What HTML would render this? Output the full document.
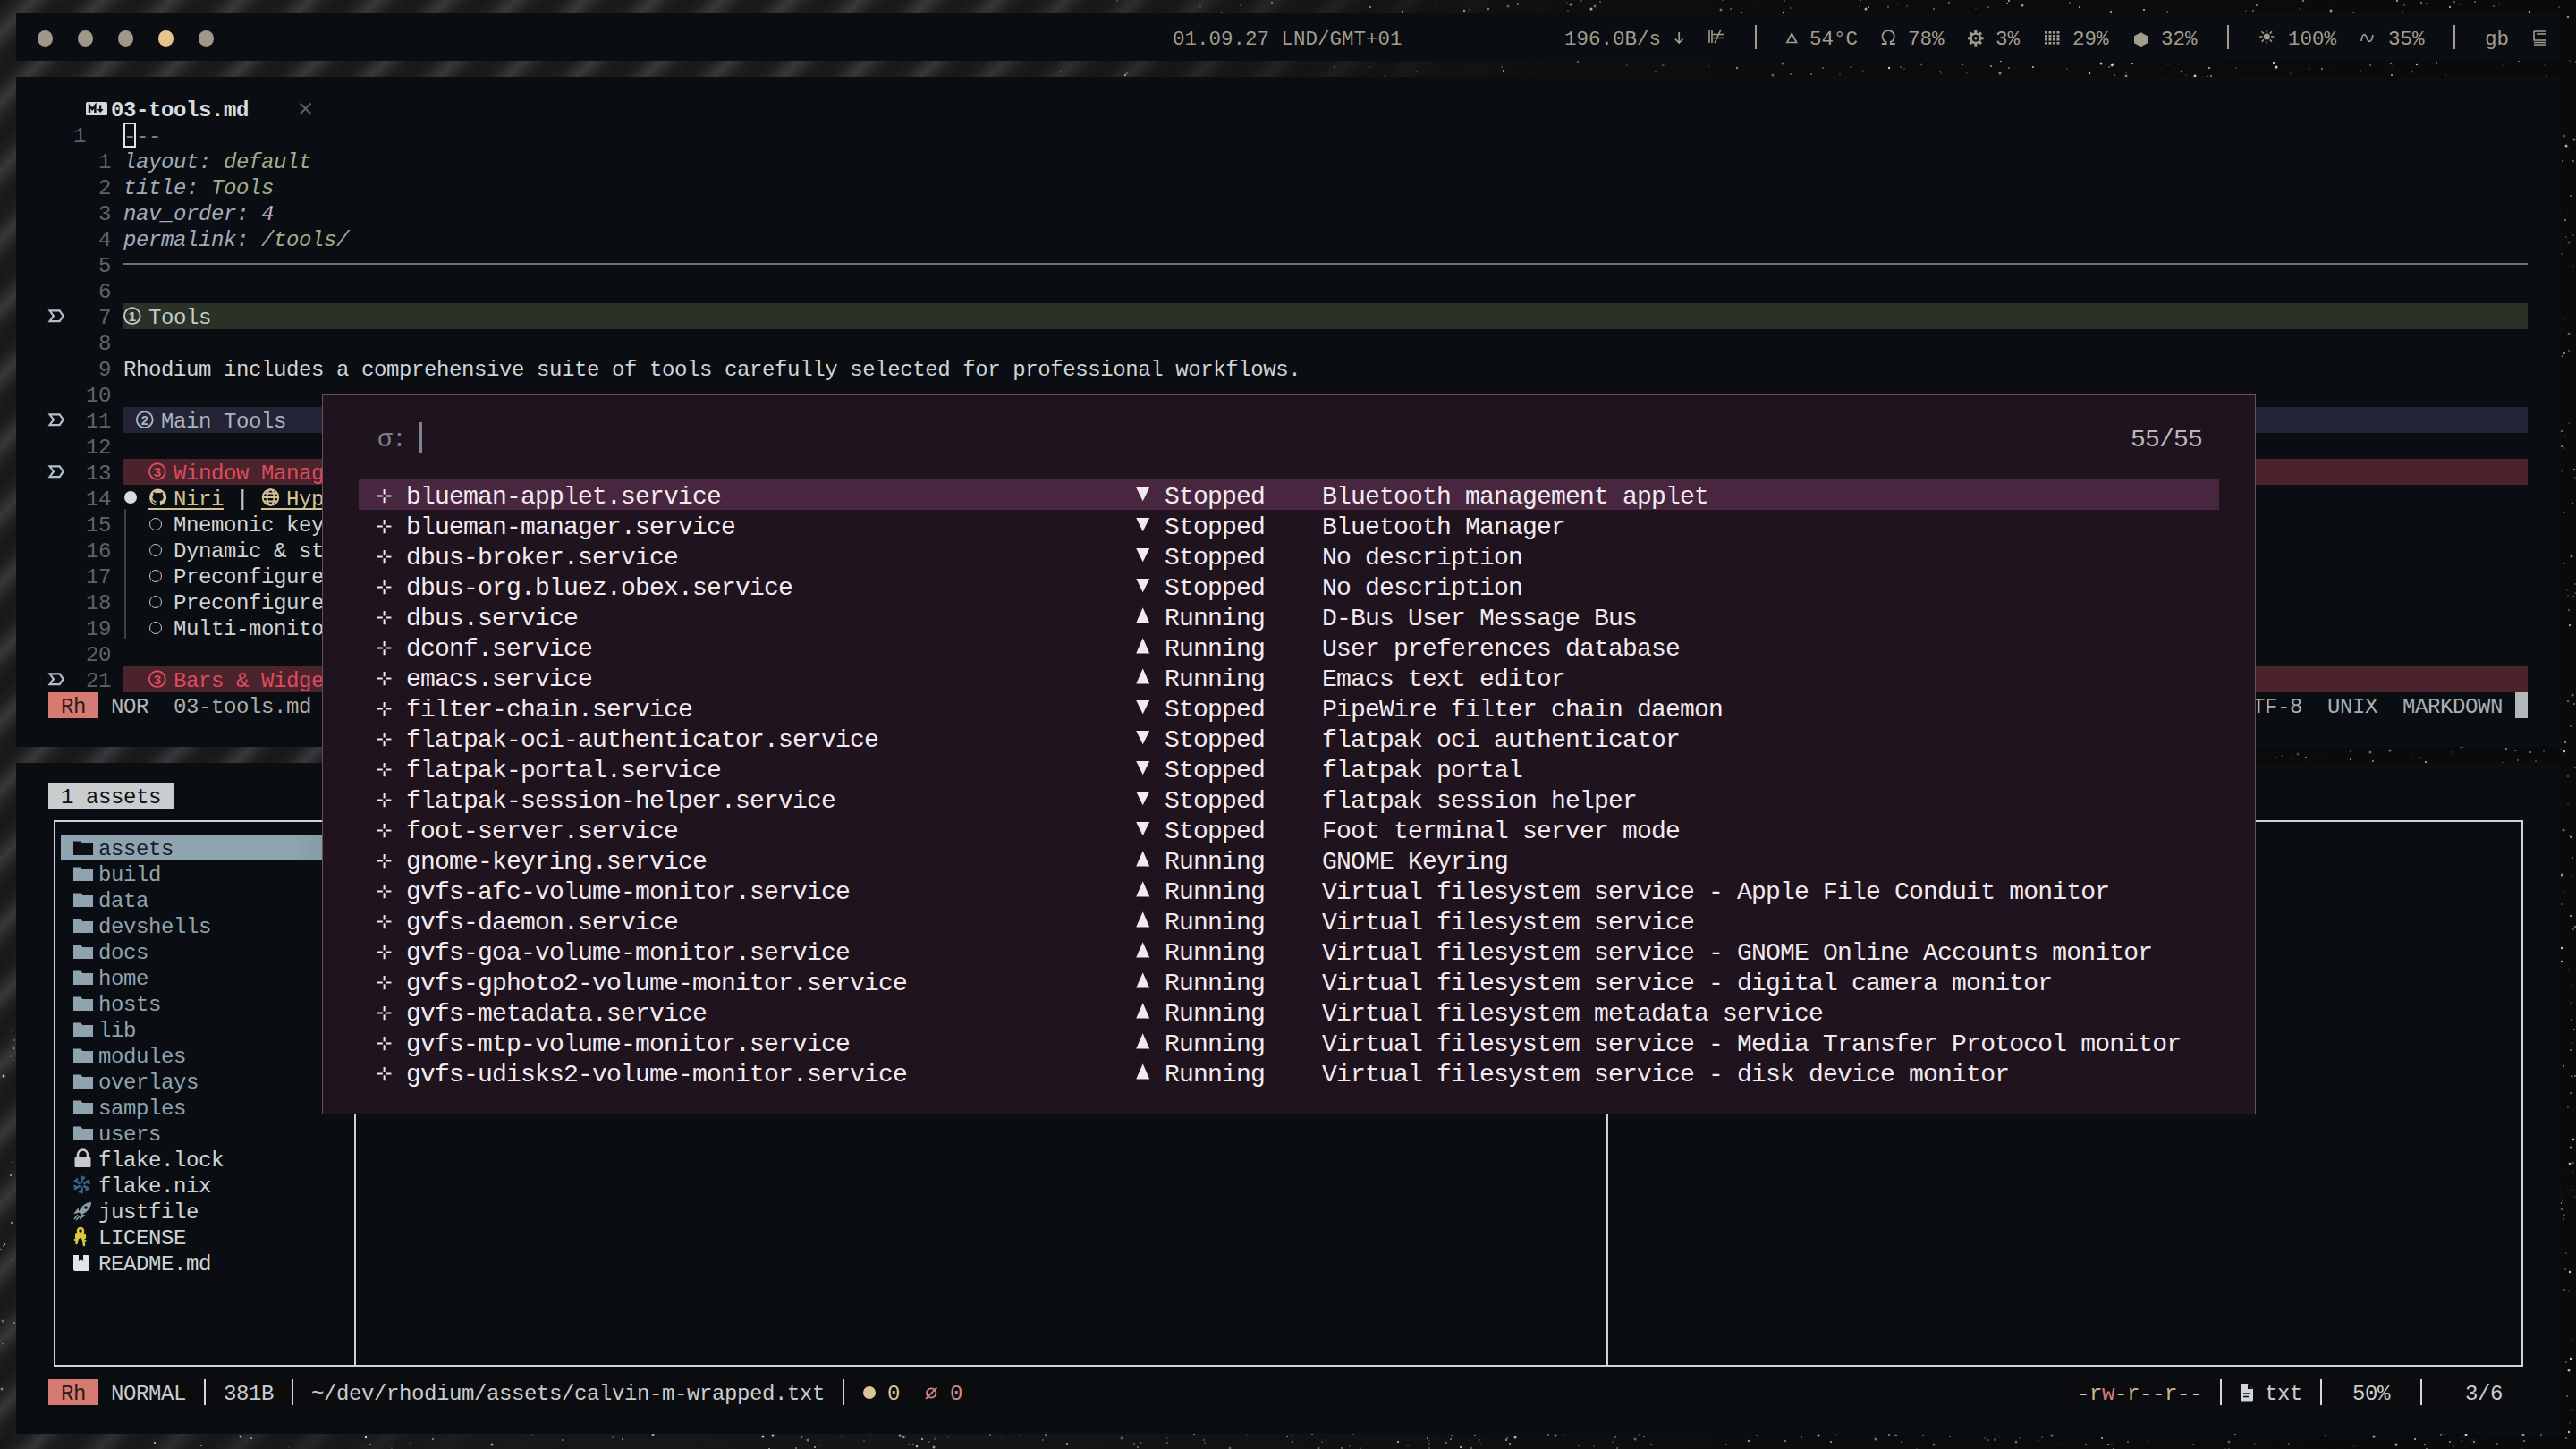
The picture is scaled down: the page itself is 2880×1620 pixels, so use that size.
<!DOCTYPE html><html><head><meta charset="utf-8"><style>
*{margin:0;padding:0;box-sizing:border-box}
html,body{width:2880px;height:1620px;overflow:hidden}
body{position:relative;background:#121212;font-family:"Liberation Mono",monospace;}
.bg{position:absolute;left:0;top:0;width:2880px;height:1620px;background:linear-gradient(90deg,#1a1a1a 0%,#151515 40%,#0c0c0c 70%,#0a0a0a 100%)}
.stripes{position:absolute;left:0;top:0;width:2880px;height:1620px;
 background:repeating-linear-gradient(135deg,#181818 0px,#1e1e1e 12px,#38383a 27px,#1e1e1e 42px,#181818 54.4px);
 -webkit-mask-image:linear-gradient(125deg,#000 0%,#000 27%,rgba(0,0,0,0.5) 36%,rgba(0,0,0,0) 44%);}
.win{position:absolute;background:#0a0e12}
.r{position:absolute}
.t{position:absolute;white-space:pre;height:29px;line-height:34px;font-size:24px;letter-spacing:-0.4px;color:#d0d4d6}
.pt{position:absolute;white-space:pre;height:34px;line-height:39px;font-size:28px;letter-spacing:-0.8px;color:#f2eaf0}
.bt{position:absolute;white-space:pre;height:52px;line-height:52px;font-size:22.5px;letter-spacing:0px;color:#a39c8c}
svg{position:absolute;overflow:visible}
</style></head><body><div class="bg"></div><div class="stripes"></div><svg style="left:0;top:0" width="2880" height="1620"><g fill="#e8e8e8"><circle cx="1249" cy="1" r="0.9" fill-opacity="0.29"/><circle cx="1783" cy="7" r="1.5" fill-opacity="0.45"/><circle cx="1686" cy="7" r="1.5" fill-opacity="0.37"/><circle cx="2246" cy="1" r="0.9" fill-opacity="0.82"/><circle cx="1924" cy="11" r="1.5" fill-opacity="0.45"/><circle cx="2002" cy="9" r="0.9" fill-opacity="0.29"/><circle cx="1664" cy="10" r="1.2" fill-opacity="0.50"/><circle cx="1926" cy="0" r="0.7" fill-opacity="0.65"/><circle cx="1422" cy="3" r="1.2" fill-opacity="0.41"/><circle cx="2360" cy="13" r="0.9" fill-opacity="0.89"/><circle cx="1966" cy="6" r="0.6" fill-opacity="0.36"/><circle cx="1697" cy="4" r="0.9" fill-opacity="0.60"/><circle cx="1756" cy="5" r="1.5" fill-opacity="0.59"/><circle cx="1779" cy="10" r="1.5" fill-opacity="0.76"/><circle cx="2519" cy="12" r="0.9" fill-opacity="0.51"/><circle cx="1387" cy="6" r="0.7" fill-opacity="0.54"/><circle cx="1768" cy="1" r="0.9" fill-opacity="0.35"/><circle cx="1342" cy="7" r="0.6" fill-opacity="0.74"/><circle cx="2132" cy="7" r="1.0" fill-opacity="0.27"/><circle cx="2739" cy="8" r="1.0" fill-opacity="0.84"/><circle cx="2183" cy="4" r="0.6" fill-opacity="0.70"/><circle cx="2223" cy="8" r="0.8" fill-opacity="0.66"/><circle cx="2314" cy="3" r="1.2" fill-opacity="0.27"/><circle cx="1994" cy="14" r="1.2" fill-opacity="0.89"/><circle cx="2750" cy="5" r="0.7" fill-opacity="0.56"/><circle cx="2079" cy="7" r="0.6" fill-opacity="0.72"/><circle cx="2606" cy="12" r="1.5" fill-opacity="0.64"/><circle cx="1366" cy="14" r="1.0" fill-opacity="0.34"/><circle cx="2511" cy="12" r="0.8" fill-opacity="0.39"/><circle cx="1568" cy="13" r="1.2" fill-opacity="0.48"/><circle cx="1532" cy="8" r="0.9" fill-opacity="0.75"/><circle cx="1753" cy="12" r="0.7" fill-opacity="0.56"/><circle cx="2089" cy="8" r="1.0" fill-opacity="0.59"/><circle cx="2575" cy="1" r="1.0" fill-opacity="0.64"/><circle cx="2325" cy="8" r="1.0" fill-opacity="0.82"/><circle cx="2713" cy="4" r="0.7" fill-opacity="0.80"/><circle cx="2080" cy="0" r="0.9" fill-opacity="0.71"/><circle cx="2767" cy="2" r="0.7" fill-opacity="0.88"/><circle cx="2244" cy="4" r="0.9" fill-opacity="0.80"/><circle cx="1947" cy="14" r="1.0" fill-opacity="0.85"/><circle cx="1643" cy="11" r="0.6" fill-opacity="0.77"/><circle cx="1752" cy="3" r="0.6" fill-opacity="0.54"/><circle cx="2111" cy="8" r="0.9" fill-opacity="0.41"/><circle cx="2794" cy="5" r="0.7" fill-opacity="0.47"/><circle cx="2397" cy="11" r="0.9" fill-opacity="0.89"/><circle cx="2828" cy="13" r="1.2" fill-opacity="0.73"/><circle cx="2423" cy="13" r="0.8" fill-opacity="0.64"/><circle cx="1995" cy="1" r="0.8" fill-opacity="0.54"/><circle cx="2162" cy="10" r="1.0" fill-opacity="0.50"/><circle cx="2086" cy="10" r="1.5" fill-opacity="0.71"/><circle cx="1637" cy="12" r="1.2" fill-opacity="0.63"/><circle cx="2571" cy="10" r="0.7" fill-opacity="0.31"/><circle cx="2686" cy="13" r="1.0" fill-opacity="0.29"/><circle cx="2122" cy="4" r="0.8" fill-opacity="0.40"/><circle cx="2179" cy="3" r="0.9" fill-opacity="0.57"/><circle cx="2209" cy="9" r="0.6" fill-opacity="0.64"/><circle cx="1789" cy="2" r="0.9" fill-opacity="0.42"/><circle cx="1935" cy="10" r="0.8" fill-opacity="0.71"/><circle cx="2861" cy="8" r="0.6" fill-opacity="0.86"/><circle cx="2788" cy="7" r="0.7" fill-opacity="0.85"/><circle cx="2680" cy="1" r="1.2" fill-opacity="0.59"/><circle cx="2744" cy="2" r="1.0" fill-opacity="0.43"/><circle cx="2523" cy="6" r="0.9" fill-opacity="0.69"/><circle cx="2707" cy="3" r="1.2" fill-opacity="0.44"/><circle cx="1697" cy="5" r="0.8" fill-opacity="0.81"/><circle cx="2261" cy="6" r="1.5" fill-opacity="0.66"/><circle cx="2631" cy="14" r="1.2" fill-opacity="0.30"/><circle cx="2688" cy="6" r="0.7" fill-opacity="0.67"/><circle cx="1605" cy="6" r="0.7" fill-opacity="0.30"/><circle cx="2148" cy="72" r="1.5" fill-opacity="0.29"/><circle cx="2444" cy="84" r="0.6" fill-opacity="0.53"/><circle cx="2199" cy="82" r="0.9" fill-opacity="0.25"/><circle cx="2464" cy="86" r="0.6" fill-opacity="0.40"/><circle cx="2377" cy="81" r="0.9" fill-opacity="0.31"/><circle cx="2237" cy="68" r="1.0" fill-opacity="0.85"/><circle cx="1859" cy="73" r="0.8" fill-opacity="0.59"/><circle cx="1260" cy="82" r="0.8" fill-opacity="0.59"/><circle cx="1679" cy="75" r="1.0" fill-opacity="0.25"/><circle cx="1548" cy="86" r="0.8" fill-opacity="0.67"/><circle cx="2545" cy="77" r="0.7" fill-opacity="0.27"/><circle cx="1186" cy="80" r="0.7" fill-opacity="0.57"/><circle cx="1942" cy="76" r="1.2" fill-opacity="0.53"/><circle cx="2069" cy="75" r="0.6" fill-opacity="0.77"/><circle cx="2129" cy="77" r="0.7" fill-opacity="0.45"/><circle cx="2362" cy="72" r="1.5" fill-opacity="0.83"/><circle cx="2582" cy="77" r="0.6" fill-opacity="0.87"/><circle cx="2805" cy="71" r="0.6" fill-opacity="0.37"/><circle cx="2417" cy="86" r="0.6" fill-opacity="0.25"/><circle cx="2650" cy="73" r="1.0" fill-opacity="0.47"/><circle cx="2639" cy="79" r="0.6" fill-opacity="0.79"/><circle cx="2236" cy="82" r="1.5" fill-opacity="0.57"/><circle cx="2673" cy="71" r="1.2" fill-opacity="0.45"/><circle cx="1993" cy="71" r="1.5" fill-opacity="0.46"/><circle cx="2845" cy="73" r="0.6" fill-opacity="0.52"/><circle cx="2847" cy="85" r="0.7" fill-opacity="0.52"/><circle cx="2439" cy="80" r="1.5" fill-opacity="0.44"/><circle cx="2384" cy="71" r="1.0" fill-opacity="0.81"/><circle cx="2724" cy="70" r="1.0" fill-opacity="0.48"/><circle cx="2880" cy="69" r="0.7" fill-opacity="0.78"/><circle cx="2358" cy="75" r="1.0" fill-opacity="0.45"/><circle cx="1584" cy="80" r="0.7" fill-opacity="0.51"/><circle cx="2545" cy="75" r="1.5" fill-opacity="0.90"/><circle cx="2543" cy="76" r="0.6" fill-opacity="0.28"/><circle cx="2170" cy="82" r="0.8" fill-opacity="0.33"/><circle cx="2716" cy="86" r="0.6" fill-opacity="0.64"/><circle cx="1982" cy="84" r="1.5" fill-opacity="0.39"/><circle cx="1492" cy="75" r="0.7" fill-opacity="0.88"/><circle cx="2349" cy="71" r="1.5" fill-opacity="0.74"/><circle cx="2246" cy="76" r="0.9" fill-opacity="0.51"/><circle cx="2311" cy="77" r="0.6" fill-opacity="0.66"/><circle cx="2468" cy="86" r="1.5" fill-opacity="0.32"/><circle cx="2336" cy="82" r="1.2" fill-opacity="0.85"/><circle cx="2349" cy="71" r="0.9" fill-opacity="0.39"/><circle cx="2697" cy="80" r="0.7" fill-opacity="0.76"/><circle cx="2472" cy="85" r="1.0" fill-opacity="0.63"/><circle cx="2542" cy="70" r="1.2" fill-opacity="0.81"/><circle cx="2125" cy="75" r="0.8" fill-opacity="0.63"/><circle cx="2361" cy="73" r="1.5" fill-opacity="0.63"/><circle cx="1911" cy="74" r="0.6" fill-opacity="0.39"/><circle cx="1764" cy="69" r="1.0" fill-opacity="0.48"/><circle cx="1681" cy="79" r="1.0" fill-opacity="0.79"/><circle cx="2038" cy="76" r="0.7" fill-opacity="0.82"/><circle cx="2253" cy="75" r="0.6" fill-opacity="0.29"/><circle cx="2364" cy="84" r="1.0" fill-opacity="0.54"/><circle cx="2699" cy="81" r="0.6" fill-opacity="0.28"/><circle cx="1531" cy="75" r="0.6" fill-opacity="0.84"/><circle cx="1851" cy="80" r="1.0" fill-opacity="0.36"/><circle cx="2561" cy="82" r="0.6" fill-opacity="0.49"/><circle cx="1258" cy="84" r="1.2" fill-opacity="0.54"/><circle cx="2002" cy="83" r="0.8" fill-opacity="0.66"/><circle cx="2799" cy="73" r="0.7" fill-opacity="0.31"/><circle cx="2424" cy="72" r="0.8" fill-opacity="0.37"/><circle cx="2454" cy="85" r="1.5" fill-opacity="0.89"/><circle cx="2470" cy="76" r="1.0" fill-opacity="0.83"/><circle cx="2273" cy="75" r="1.0" fill-opacity="0.84"/><circle cx="2675" cy="74" r="0.6" fill-opacity="0.27"/><circle cx="2194" cy="72" r="1.0" fill-opacity="0.83"/><circle cx="2720" cy="70" r="0.6" fill-opacity="0.27"/><circle cx="2734" cy="84" r="0.6" fill-opacity="0.79"/><circle cx="1819" cy="73" r="0.6" fill-opacity="0.76"/><circle cx="1861" cy="73" r="0.8" fill-opacity="0.26"/><circle cx="2226" cy="74" r="1.0" fill-opacity="0.62"/><circle cx="2057" cy="83" r="0.8" fill-opacity="0.36"/><circle cx="2816" cy="68" r="0.9" fill-opacity="0.70"/><circle cx="2377" cy="85" r="1.5" fill-opacity="0.58"/><circle cx="2702" cy="72" r="1.2" fill-opacity="0.75"/><circle cx="2674" cy="84" r="0.9" fill-opacity="0.83"/><circle cx="2596" cy="77" r="1.2" fill-opacity="0.40"/><circle cx="2169" cy="80" r="0.8" fill-opacity="0.59"/><circle cx="2500" cy="76" r="0.8" fill-opacity="0.36"/><circle cx="2025" cy="83" r="0.7" fill-opacity="0.88"/><circle cx="2083" cy="79" r="0.7" fill-opacity="0.46"/><circle cx="2112" cy="76" r="1.2" fill-opacity="0.84"/><circle cx="2019" cy="846" r="1.5" fill-opacity="0.40"/><circle cx="2080" cy="851" r="1.2" fill-opacity="0.63"/><circle cx="658" cy="838" r="0.9" fill-opacity="0.45"/><circle cx="1809" cy="837" r="1.5" fill-opacity="0.51"/><circle cx="2052" cy="838" r="0.9" fill-opacity="0.55"/><circle cx="1790" cy="842" r="1.5" fill-opacity="0.37"/><circle cx="1885" cy="849" r="0.9" fill-opacity="0.84"/><circle cx="2063" cy="852" r="0.8" fill-opacity="0.32"/><circle cx="1655" cy="845" r="1.0" fill-opacity="0.26"/><circle cx="2283" cy="842" r="1.2" fill-opacity="0.87"/><circle cx="2197" cy="837" r="0.8" fill-opacity="0.66"/><circle cx="727" cy="842" r="0.6" fill-opacity="0.52"/><circle cx="1211" cy="848" r="0.8" fill-opacity="0.32"/><circle cx="2798" cy="853" r="0.9" fill-opacity="0.39"/><circle cx="1827" cy="843" r="0.7" fill-opacity="0.78"/><circle cx="2290" cy="842" r="1.5" fill-opacity="0.61"/><circle cx="2450" cy="840" r="0.8" fill-opacity="0.89"/><circle cx="1955" cy="844" r="1.5" fill-opacity="0.43"/><circle cx="1234" cy="846" r="0.8" fill-opacity="0.35"/><circle cx="873" cy="842" r="1.0" fill-opacity="0.84"/><circle cx="2258" cy="838" r="1.2" fill-opacity="0.63"/><circle cx="1893" cy="839" r="0.8" fill-opacity="0.41"/><circle cx="2236" cy="841" r="0.9" fill-opacity="0.76"/><circle cx="2250" cy="847" r="1.5" fill-opacity="0.66"/><circle cx="855" cy="844" r="0.6" fill-opacity="0.73"/><circle cx="1263" cy="851" r="0.8" fill-opacity="0.52"/><circle cx="2382" cy="844" r="0.9" fill-opacity="0.55"/><circle cx="1554" cy="851" r="1.5" fill-opacity="0.46"/><circle cx="2004" cy="844" r="0.9" fill-opacity="0.49"/><circle cx="1206" cy="852" r="1.2" fill-opacity="0.48"/><circle cx="1862" cy="835" r="1.2" fill-opacity="0.86"/><circle cx="1396" cy="851" r="1.2" fill-opacity="0.52"/><circle cx="2628" cy="840" r="0.8" fill-opacity="0.61"/><circle cx="2381" cy="840" r="0.9" fill-opacity="0.47"/><circle cx="2835" cy="851" r="0.7" fill-opacity="0.68"/><circle cx="2281" cy="841" r="0.8" fill-opacity="0.33"/><circle cx="2802" cy="837" r="0.9" fill-opacity="0.72"/><circle cx="2551" cy="845" r="0.8" fill-opacity="0.32"/><circle cx="2206" cy="836" r="1.0" fill-opacity="0.65"/><circle cx="1776" cy="846" r="1.0" fill-opacity="0.82"/><circle cx="1801" cy="838" r="1.5" fill-opacity="0.27"/><circle cx="2231" cy="851" r="0.8" fill-opacity="0.82"/><circle cx="2484" cy="838" r="0.6" fill-opacity="0.53"/><circle cx="1848" cy="852" r="1.0" fill-opacity="0.59"/><circle cx="2375" cy="849" r="1.2" fill-opacity="0.85"/><circle cx="1286" cy="835" r="1.0" fill-opacity="0.90"/><circle cx="1899" cy="838" r="1.0" fill-opacity="0.32"/><circle cx="1856" cy="839" r="0.6" fill-opacity="0.53"/><circle cx="2472" cy="839" r="0.9" fill-opacity="0.26"/><circle cx="2072" cy="839" r="0.7" fill-opacity="0.85"/><circle cx="1606" cy="844" r="0.8" fill-opacity="0.84"/><circle cx="2544" cy="847" r="0.9" fill-opacity="0.45"/><circle cx="2101" cy="838" r="0.9" fill-opacity="0.65"/><circle cx="2309" cy="844" r="0.9" fill-opacity="0.86"/><circle cx="2260" cy="845" r="0.6" fill-opacity="0.65"/><circle cx="1875" cy="849" r="1.5" fill-opacity="0.64"/><circle cx="2815" cy="850" r="0.8" fill-opacity="0.63"/><circle cx="2812" cy="839" r="0.9" fill-opacity="0.64"/><circle cx="2581" cy="850" r="0.6" fill-opacity="0.46"/><circle cx="2198" cy="849" r="0.7" fill-opacity="0.78"/><circle cx="2498" cy="845" r="1.5" fill-opacity="0.77"/><circle cx="1578" cy="849" r="1.0" fill-opacity="0.31"/><circle cx="1595" cy="849" r="1.5" fill-opacity="0.72"/><circle cx="2829" cy="841" r="0.9" fill-opacity="0.55"/><circle cx="2280" cy="843" r="1.5" fill-opacity="0.48"/><circle cx="1458" cy="839" r="0.6" fill-opacity="0.37"/><circle cx="2019" cy="842" r="0.9" fill-opacity="0.76"/><circle cx="2468" cy="839" r="0.9" fill-opacity="0.49"/><circle cx="1496" cy="835" r="1.5" fill-opacity="0.81"/><circle cx="1401" cy="845" r="1.5" fill-opacity="0.43"/><circle cx="1753" cy="837" r="0.8" fill-opacity="0.38"/><circle cx="1605" cy="851" r="1.5" fill-opacity="0.84"/><circle cx="1626" cy="847" r="1.2" fill-opacity="0.58"/><circle cx="2712" cy="852" r="1.0" fill-opacity="0.84"/><circle cx="2411" cy="836" r="1.2" fill-opacity="0.73"/><circle cx="2194" cy="844" r="0.8" fill-opacity="0.74"/><circle cx="2705" cy="847" r="1.0" fill-opacity="0.54"/><circle cx="1879" cy="843" r="0.9" fill-opacity="0.33"/><circle cx="1386" cy="838" r="0.7" fill-opacity="0.84"/><circle cx="2569" cy="843" r="1.5" fill-opacity="0.27"/><circle cx="2672" cy="839" r="1.5" fill-opacity="0.49"/><circle cx="2157" cy="849" r="0.9" fill-opacity="0.80"/><circle cx="1810" cy="843" r="1.5" fill-opacity="0.40"/><circle cx="2120" cy="838" r="0.7" fill-opacity="0.54"/><circle cx="2316" cy="840" r="0.9" fill-opacity="0.84"/><circle cx="2578" cy="847" r="0.9" fill-opacity="0.79"/><circle cx="1244" cy="840" r="0.7" fill-opacity="0.31"/><circle cx="834" cy="851" r="1.2" fill-opacity="0.89"/><circle cx="1462" cy="844" r="1.5" fill-opacity="0.79"/><circle cx="1517" cy="838" r="0.9" fill-opacity="0.39"/><circle cx="1645" cy="837" r="1.5" fill-opacity="0.40"/><circle cx="2561" cy="848" r="0.7" fill-opacity="0.38"/><circle cx="1764" cy="848" r="1.0" fill-opacity="0.45"/><circle cx="2422" cy="851" r="0.8" fill-opacity="0.47"/><circle cx="2425" cy="851" r="0.6" fill-opacity="0.52"/><circle cx="2197" cy="837" r="0.7" fill-opacity="0.37"/><circle cx="2395" cy="842" r="0.8" fill-opacity="0.62"/><circle cx="2471" cy="841" r="1.0" fill-opacity="0.30"/><circle cx="2628" cy="849" r="1.0" fill-opacity="0.74"/><circle cx="1425" cy="844" r="1.0" fill-opacity="0.34"/><circle cx="2751" cy="835" r="1.2" fill-opacity="0.38"/><circle cx="1506" cy="848" r="1.5" fill-opacity="0.31"/><circle cx="1687" cy="849" r="0.6" fill-opacity="0.51"/><circle cx="2237" cy="841" r="0.8" fill-opacity="0.72"/><circle cx="2428" cy="845" r="0.8" fill-opacity="0.78"/><circle cx="2441" cy="836" r="1.2" fill-opacity="0.86"/><circle cx="1050" cy="845" r="0.9" fill-opacity="0.38"/><circle cx="1927" cy="839" r="0.9" fill-opacity="0.75"/><circle cx="2698" cy="846" r="0.6" fill-opacity="0.27"/><circle cx="1848" cy="840" r="0.8" fill-opacity="0.66"/><circle cx="2322" cy="836" r="0.6" fill-opacity="0.59"/><circle cx="1249" cy="852" r="0.8" fill-opacity="0.48"/><circle cx="2653" cy="851" r="1.0" fill-opacity="0.60"/><circle cx="846" cy="842" r="0.7" fill-opacity="0.73"/><circle cx="2132" cy="840" r="1.2" fill-opacity="0.62"/><circle cx="1873" cy="839" r="0.9" fill-opacity="0.83"/><circle cx="1572" cy="852" r="0.8" fill-opacity="0.36"/><circle cx="2742" cy="841" r="0.8" fill-opacity="0.44"/><circle cx="2844" cy="840" r="0.7" fill-opacity="0.61"/><circle cx="1745" cy="841" r="1.0" fill-opacity="0.50"/><circle cx="1267" cy="848" r="0.7" fill-opacity="0.89"/><circle cx="1952" cy="852" r="1.2" fill-opacity="0.48"/><circle cx="1945" cy="846" r="1.5" fill-opacity="0.80"/><circle cx="2867" cy="840" r="1.2" fill-opacity="0.84"/><circle cx="2205" cy="846" r="1.0" fill-opacity="0.35"/><circle cx="2448" cy="840" r="0.6" fill-opacity="0.50"/><circle cx="1303" cy="843" r="0.8" fill-opacity="0.48"/><circle cx="1515" cy="846" r="0.6" fill-opacity="0.76"/><circle cx="2447" cy="844" r="0.7" fill-opacity="0.60"/><circle cx="2313" cy="843" r="0.7" fill-opacity="0.31"/><circle cx="2650" cy="841" r="1.5" fill-opacity="0.41"/><circle cx="2753" cy="835" r="0.9" fill-opacity="0.44"/><circle cx="1545" cy="841" r="0.9" fill-opacity="0.59"/><circle cx="1490" cy="847" r="0.8" fill-opacity="0.28"/><circle cx="1948" cy="843" r="0.6" fill-opacity="0.59"/><circle cx="1617" cy="1613" r="0.9" fill-opacity="0.57"/><circle cx="1268" cy="1614" r="0.8" fill-opacity="0.70"/><circle cx="2150" cy="1605" r="0.8" fill-opacity="0.89"/><circle cx="2379" cy="1612" r="0.8" fill-opacity="0.70"/><circle cx="2363" cy="1620" r="0.9" fill-opacity="0.66"/><circle cx="1509" cy="1617" r="0.7" fill-opacity="0.52"/><circle cx="173" cy="1613" r="1.0" fill-opacity="0.90"/><circle cx="1833" cy="1604" r="1.5" fill-opacity="0.25"/><circle cx="2047" cy="1612" r="0.9" fill-opacity="0.80"/><circle cx="1688" cy="1614" r="0.9" fill-opacity="0.75"/><circle cx="1633" cy="1618" r="1.0" fill-opacity="0.90"/><circle cx="1654" cy="1610" r="0.7" fill-opacity="0.59"/><circle cx="1467" cy="1603" r="1.0" fill-opacity="0.57"/><circle cx="1346" cy="1610" r="1.2" fill-opacity="0.26"/><circle cx="2219" cy="1608" r="0.8" fill-opacity="0.43"/><circle cx="2729" cy="1604" r="1.0" fill-opacity="0.50"/><circle cx="2764" cy="1610" r="0.7" fill-opacity="0.39"/><circle cx="459" cy="1613" r="0.6" fill-opacity="0.83"/><circle cx="2350" cy="1608" r="0.9" fill-opacity="0.89"/><circle cx="1684" cy="1610" r="1.2" fill-opacity="0.56"/><circle cx="2283" cy="1607" r="0.8" fill-opacity="0.50"/><circle cx="1045" cy="1609" r="0.8" fill-opacity="0.51"/><circle cx="1012" cy="1607" r="0.8" fill-opacity="0.47"/><circle cx="1254" cy="1608" r="1.5" fill-opacity="0.35"/><circle cx="2033" cy="1605" r="1.5" fill-opacity="0.76"/><circle cx="1598" cy="1611" r="0.7" fill-opacity="0.35"/><circle cx="1016" cy="1615" r="1.0" fill-opacity="0.39"/><circle cx="2739" cy="1612" r="0.9" fill-opacity="0.69"/><circle cx="2713" cy="1620" r="0.9" fill-opacity="0.63"/><circle cx="1060" cy="1607" r="0.7" fill-opacity="0.33"/><circle cx="2162" cy="1615" r="1.5" fill-opacity="0.43"/><circle cx="2223" cy="1610" r="1.0" fill-opacity="0.34"/><circle cx="2235" cy="1607" r="0.6" fill-opacity="0.29"/><circle cx="2632" cy="1617" r="0.7" fill-opacity="0.29"/><circle cx="896" cy="1607" r="1.2" fill-opacity="0.51"/><circle cx="1025" cy="1617" r="1.2" fill-opacity="0.82"/><circle cx="2480" cy="1605" r="0.6" fill-opacity="0.49"/><circle cx="2302" cy="1615" r="0.6" fill-opacity="0.68"/><circle cx="2014" cy="1607" r="0.8" fill-opacity="0.84"/><circle cx="281" cy="1608" r="1.0" fill-opacity="0.73"/><circle cx="2052" cy="1604" r="0.7" fill-opacity="0.53"/><circle cx="2180" cy="1606" r="1.0" fill-opacity="0.45"/><circle cx="1838" cy="1606" r="1.0" fill-opacity="0.57"/><circle cx="1500" cy="1619" r="1.0" fill-opacity="0.48"/><circle cx="1749" cy="1604" r="0.6" fill-opacity="0.27"/><circle cx="917" cy="1616" r="0.6" fill-opacity="0.52"/><circle cx="2143" cy="1620" r="0.7" fill-opacity="0.43"/><circle cx="2679" cy="1615" r="1.5" fill-opacity="0.80"/><circle cx="1803" cy="1612" r="0.7" fill-opacity="0.53"/><circle cx="1474" cy="1619" r="1.5" fill-opacity="0.37"/><circle cx="2743" cy="1617" r="0.7" fill-opacity="0.61"/><circle cx="2792" cy="1614" r="0.7" fill-opacity="0.88"/><circle cx="484" cy="1609" r="1.2" fill-opacity="0.45"/><circle cx="685" cy="1607" r="0.9" fill-opacity="0.34"/><circle cx="1846" cy="1615" r="1.2" fill-opacity="0.34"/><circle cx="1622" cy="1609" r="1.0" fill-opacity="0.53"/><circle cx="2711" cy="1615" r="0.9" fill-opacity="0.80"/><circle cx="1170" cy="1607" r="0.6" fill-opacity="0.48"/><circle cx="595" cy="1604" r="0.7" fill-opacity="0.32"/><circle cx="890" cy="1619" r="0.9" fill-opacity="0.55"/><circle cx="1045" cy="1606" r="0.6" fill-opacity="0.55"/><circle cx="2822" cy="1611" r="0.8" fill-opacity="0.89"/><circle cx="1623" cy="1605" r="0.9" fill-opacity="0.57"/><circle cx="2258" cy="1608" r="0.6" fill-opacity="0.67"/><circle cx="1808" cy="1619" r="0.8" fill-opacity="0.67"/><circle cx="225" cy="1616" r="0.9" fill-opacity="0.80"/><circle cx="853" cy="1606" r="1.5" fill-opacity="0.83"/><circle cx="1964" cy="1605" r="0.8" fill-opacity="0.73"/><circle cx="941" cy="1606" r="0.8" fill-opacity="0.40"/><circle cx="730" cy="1604" r="1.5" fill-opacity="0.66"/><circle cx="2361" cy="1615" r="0.7" fill-opacity="0.57"/><circle cx="1439" cy="1606" r="1.0" fill-opacity="0.66"/><circle cx="409" cy="1607" r="1.2" fill-opacity="0.88"/><circle cx="550" cy="1615" r="1.5" fill-opacity="0.65"/><circle cx="2401" cy="1612" r="0.6" fill-opacity="0.68"/><circle cx="1482" cy="1610" r="0.9" fill-opacity="0.26"/><circle cx="2753" cy="1606" r="0.9" fill-opacity="0.44"/><circle cx="1276" cy="1613" r="0.7" fill-opacity="0.55"/><circle cx="1563" cy="1612" r="1.0" fill-opacity="0.84"/><circle cx="2492" cy="1620" r="1.0" fill-opacity="0.30"/><circle cx="2332" cy="1615" r="1.2" fill-opacity="0.44"/><circle cx="1645" cy="1619" r="1.2" fill-opacity="0.34"/><circle cx="2492" cy="1612" r="1.5" fill-opacity="0.37"/><circle cx="1955" cy="1611" r="1.2" fill-opacity="0.63"/><circle cx="1598" cy="1619" r="0.7" fill-opacity="0.62"/><circle cx="1141" cy="1605" r="0.7" fill-opacity="0.61"/><circle cx="323" cy="1618" r="0.6" fill-opacity="0.37"/><circle cx="1930" cy="1615" r="0.9" fill-opacity="0.40"/><circle cx="1649" cy="1605" r="1.0" fill-opacity="0.62"/><circle cx="2452" cy="1615" r="0.7" fill-opacity="0.81"/><circle cx="1586" cy="1615" r="0.6" fill-opacity="0.66"/><circle cx="2766" cy="1612" r="1.2" fill-opacity="0.50"/><circle cx="2232" cy="1605" r="0.6" fill-opacity="0.51"/><circle cx="2752" cy="1611" r="0.7" fill-opacity="0.53"/><circle cx="2559" cy="1614" r="1.0" fill-opacity="0.32"/><circle cx="2097" cy="1609" r="1.5" fill-opacity="0.47"/><circle cx="2199" cy="1615" r="0.6" fill-opacity="0.41"/><circle cx="1478" cy="1612" r="0.9" fill-opacity="0.28"/><circle cx="1739" cy="1605" r="1.5" fill-opacity="0.64"/><circle cx="1021" cy="1615" r="1.0" fill-opacity="0.54"/><circle cx="2279" cy="1611" r="0.8" fill-opacity="0.37"/><circle cx="1596" cy="1608" r="0.9" fill-opacity="0.79"/><circle cx="1694" cy="1607" r="1.5" fill-opacity="0.78"/><circle cx="2732" cy="1603" r="0.7" fill-opacity="0.57"/><circle cx="1394" cy="1604" r="0.6" fill-opacity="0.37"/><circle cx="2357" cy="1615" r="0.9" fill-opacity="0.88"/><circle cx="1996" cy="1611" r="1.0" fill-opacity="0.59"/><circle cx="1039" cy="1612" r="0.7" fill-opacity="0.63"/><circle cx="1347" cy="1613" r="0.8" fill-opacity="0.45"/><circle cx="966" cy="1611" r="0.7" fill-opacity="0.55"/><circle cx="2841" cy="1604" r="1.2" fill-opacity="0.34"/><circle cx="1107" cy="1604" r="0.8" fill-opacity="0.62"/><circle cx="1521" cy="1619" r="0.6" fill-opacity="0.84"/><circle cx="2600" cy="1605" r="0.9" fill-opacity="0.66"/><circle cx="1828" cy="1609" r="1.5" fill-opacity="0.40"/><circle cx="2294" cy="1605" r="1.5" fill-opacity="0.47"/><circle cx="1044" cy="1618" r="1.5" fill-opacity="0.61"/><circle cx="1169" cy="1604" r="0.8" fill-opacity="0.82"/><circle cx="2254" cy="1612" r="1.5" fill-opacity="0.40"/><circle cx="1006" cy="1605" r="1.5" fill-opacity="0.69"/><circle cx="1166" cy="1610" r="0.7" fill-opacity="0.63"/><circle cx="414" cy="1615" r="1.0" fill-opacity="0.61"/><circle cx="2700" cy="1609" r="1.0" fill-opacity="0.85"/><circle cx="1685" cy="1608" r="0.9" fill-opacity="0.48"/><circle cx="2230" cy="1610" r="0.6" fill-opacity="0.80"/><circle cx="1574" cy="1616" r="0.7" fill-opacity="0.71"/><circle cx="629" cy="1610" r="1.0" fill-opacity="0.43"/><circle cx="1446" cy="1605" r="0.6" fill-opacity="0.88"/><circle cx="1731" cy="1604" r="1.0" fill-opacity="0.47"/><circle cx="2521" cy="1614" r="0.7" fill-opacity="0.46"/><circle cx="2499" cy="1603" r="1.0" fill-opacity="0.69"/><circle cx="973" cy="1604" r="0.6" fill-opacity="0.31"/><circle cx="1765" cy="1616" r="0.9" fill-opacity="0.42"/><circle cx="1335" cy="1603" r="1.0" fill-opacity="0.68"/><circle cx="903" cy="1610" r="1.5" fill-opacity="0.46"/><circle cx="269" cy="1606" r="1.5" fill-opacity="0.80"/><circle cx="1031" cy="1609" r="1.2" fill-opacity="0.63"/><circle cx="1598" cy="1614" r="0.8" fill-opacity="0.40"/><circle cx="1782" cy="1617" r="0.6" fill-opacity="0.75"/><circle cx="1305" cy="1608" r="0.8" fill-opacity="0.34"/><circle cx="2230" cy="1609" r="0.7" fill-opacity="0.51"/><circle cx="2820" cy="1619" r="0.6" fill-opacity="0.29"/><circle cx="1445" cy="1612" r="1.0" fill-opacity="0.49"/><circle cx="2654" cy="1606" r="1.5" fill-opacity="0.71"/><circle cx="1272" cy="1618" r="0.8" fill-opacity="0.84"/><circle cx="1120" cy="1607" r="0.6" fill-opacity="0.32"/><circle cx="2112" cy="1604" r="0.9" fill-opacity="0.69"/><circle cx="1010" cy="1607" r="0.9" fill-opacity="0.86"/><circle cx="1806" cy="1607" r="0.8" fill-opacity="0.71"/><circle cx="696" cy="1609" r="0.9" fill-opacity="0.67"/><circle cx="860" cy="1620" r="1.0" fill-opacity="0.76"/><circle cx="1375" cy="1619" r="1.5" fill-opacity="0.34"/><circle cx="864" cy="1605" r="1.5" fill-opacity="0.83"/><circle cx="1305" cy="1613" r="0.7" fill-opacity="0.80"/><circle cx="2118" cy="1604" r="0.9" fill-opacity="0.37"/><circle cx="2488" cy="1620" r="0.6" fill-opacity="0.77"/><circle cx="438" cy="1619" r="0.8" fill-opacity="0.35"/><circle cx="2120" cy="1605" r="1.2" fill-opacity="0.51"/><circle cx="1193" cy="1614" r="0.9" fill-opacity="0.82"/><circle cx="2821" cy="1604" r="1.5" fill-opacity="0.66"/><circle cx="1656" cy="1615" r="0.6" fill-opacity="0.89"/><circle cx="911" cy="1618" r="0.9" fill-opacity="0.88"/><circle cx="1513" cy="1603" r="1.0" fill-opacity="0.35"/><circle cx="2126" cy="1612" r="0.8" fill-opacity="0.80"/><circle cx="2757" cy="1604" r="1.5" fill-opacity="0.88"/><circle cx="16" cy="1185" r="0.7" fill-opacity="0.26"/><circle cx="5" cy="1565" r="0.6" fill-opacity="0.52"/><circle cx="16" cy="1163" r="0.8" fill-opacity="0.60"/><circle cx="14" cy="1408" r="0.6" fill-opacity="0.51"/><circle cx="3" cy="1502" r="1.0" fill-opacity="0.38"/><circle cx="2" cy="1553" r="1.5" fill-opacity="0.49"/><circle cx="12" cy="1314" r="0.9" fill-opacity="0.80"/><circle cx="4" cy="1393" r="0.9" fill-opacity="0.50"/><circle cx="12" cy="1152" r="0.6" fill-opacity="0.61"/><circle cx="13" cy="1367" r="0.9" fill-opacity="0.78"/><circle cx="5" cy="1391" r="1.0" fill-opacity="0.83"/><circle cx="12" cy="1181" r="0.6" fill-opacity="0.52"/><circle cx="1" cy="1397" r="1.0" fill-opacity="0.57"/><circle cx="13" cy="1299" r="0.7" fill-opacity="0.34"/><circle cx="3" cy="1477" r="1.5" fill-opacity="0.39"/><circle cx="16" cy="1479" r="0.8" fill-opacity="0.81"/><circle cx="4" cy="1203" r="1.5" fill-opacity="0.79"/><circle cx="15" cy="1172" r="1.2" fill-opacity="0.61"/><circle cx="2871" cy="241" r="0.7" fill-opacity="0.33"/><circle cx="2871" cy="868" r="0.9" fill-opacity="0.41"/><circle cx="2873" cy="68" r="0.7" fill-opacity="0.43"/><circle cx="2872" cy="1601" r="1.2" fill-opacity="0.82"/><circle cx="2872" cy="1443" r="0.6" fill-opacity="0.57"/><circle cx="2876" cy="924" r="0.7" fill-opacity="0.31"/><circle cx="2866" cy="1363" r="0.9" fill-opacity="0.51"/><circle cx="2872" cy="473" r="0.6" fill-opacity="0.68"/><circle cx="2867" cy="395" r="1.0" fill-opacity="0.71"/><circle cx="2864" cy="398" r="0.6" fill-opacity="0.28"/><circle cx="2874" cy="1121" r="0.8" fill-opacity="0.30"/><circle cx="2876" cy="959" r="0.8" fill-opacity="0.86"/><circle cx="2870" cy="660" r="0.7" fill-opacity="0.35"/><circle cx="2872" cy="271" r="1.5" fill-opacity="0.34"/><circle cx="2866" cy="356" r="0.6" fill-opacity="0.90"/><circle cx="2876" cy="777" r="1.5" fill-opacity="0.46"/><circle cx="2864" cy="978" r="1.5" fill-opacity="0.66"/><circle cx="2877" cy="1274" r="1.2" fill-opacity="0.88"/><circle cx="2873" cy="1301" r="1.5" fill-opacity="0.73"/><circle cx="2865" cy="1342" r="0.6" fill-opacity="0.73"/><circle cx="2877" cy="1300" r="0.9" fill-opacity="0.50"/><circle cx="2874" cy="1519" r="1.2" fill-opacity="0.87"/><circle cx="2872" cy="1532" r="1.5" fill-opacity="0.76"/><circle cx="2867" cy="1358" r="0.7" fill-opacity="0.63"/><circle cx="2873" cy="1422" r="1.2" fill-opacity="0.83"/><circle cx="2864" cy="1075" r="1.2" fill-opacity="0.69"/><circle cx="2879" cy="1338" r="0.6" fill-opacity="0.40"/><circle cx="2874" cy="1283" r="1.5" fill-opacity="0.53"/><circle cx="2868" cy="487" r="0.6" fill-opacity="0.82"/><circle cx="2871" cy="666" r="0.7" fill-opacity="0.47"/><circle cx="2867" cy="573" r="1.0" fill-opacity="0.27"/><circle cx="2869" cy="1608" r="0.9" fill-opacity="0.51"/><circle cx="2872" cy="392" r="1.2" fill-opacity="0.28"/><circle cx="2877" cy="298" r="0.7" fill-opacity="0.49"/><circle cx="2867" cy="1442" r="0.9" fill-opacity="0.45"/><circle cx="2868" cy="1419" r="1.0" fill-opacity="0.37"/><circle cx="2877" cy="263" r="0.6" fill-opacity="0.80"/><circle cx="2865" cy="398" r="1.2" fill-opacity="0.41"/><circle cx="2869" cy="163" r="1.5" fill-opacity="0.74"/><circle cx="2874" cy="219" r="0.8" fill-opacity="0.68"/><circle cx="2864" cy="1011" r="0.8" fill-opacity="0.49"/><circle cx="2874" cy="1024" r="1.0" fill-opacity="0.78"/><circle cx="2864" cy="1060" r="1.2" fill-opacity="0.88"/><circle cx="2864" cy="1352" r="1.0" fill-opacity="0.50"/><circle cx="2868" cy="830" r="1.0" fill-opacity="0.74"/><circle cx="2864" cy="527" r="0.8" fill-opacity="0.34"/><circle cx="2873" cy="934" r="0.9" fill-opacity="0.36"/><circle cx="2873" cy="1591" r="0.7" fill-opacity="0.44"/><circle cx="2872" cy="682" r="1.2" fill-opacity="0.30"/><circle cx="2879" cy="1036" r="1.2" fill-opacity="0.48"/><circle cx="2878" cy="525" r="0.9" fill-opacity="0.79"/><circle cx="2876" cy="563" r="1.0" fill-opacity="0.77"/><circle cx="2864" cy="499" r="1.2" fill-opacity="0.45"/><circle cx="2864" cy="482" r="0.8" fill-opacity="0.88"/><circle cx="2866" cy="501" r="0.7" fill-opacity="0.65"/><circle cx="2879" cy="653" r="0.8" fill-opacity="0.51"/><circle cx="2870" cy="1561" r="0.7" fill-opacity="0.85"/><circle cx="2874" cy="812" r="0.7" fill-opacity="0.76"/><circle cx="2868" cy="246" r="0.9" fill-opacity="0.68"/><circle cx="2877" cy="667" r="0.9" fill-opacity="0.49"/><circle cx="2879" cy="858" r="1.2" fill-opacity="0.33"/><circle cx="2871" cy="19" r="1.2" fill-opacity="0.62"/><circle cx="2869" cy="1523" r="0.7" fill-opacity="0.83"/><circle cx="2878" cy="156" r="1.5" fill-opacity="0.52"/><circle cx="2877" cy="180" r="1.2" fill-opacity="0.36"/><circle cx="2875" cy="1203" r="0.9" fill-opacity="0.51"/><circle cx="2879" cy="1203" r="0.9" fill-opacity="0.57"/><circle cx="2869" cy="1401" r="0.7" fill-opacity="0.60"/><circle cx="2872" cy="1084" r="0.7" fill-opacity="0.39"/><circle cx="2875" cy="1498" r="0.6" fill-opacity="0.80"/><circle cx="2874" cy="936" r="1.0" fill-opacity="0.72"/><circle cx="2876" cy="1101" r="0.7" fill-opacity="0.35"/><circle cx="2874" cy="1222" r="0.8" fill-opacity="0.83"/><circle cx="2876" cy="1330" r="0.8" fill-opacity="0.34"/><circle cx="2875" cy="1140" r="0.8" fill-opacity="0.71"/><circle cx="2876" cy="980" r="1.0" fill-opacity="0.39"/><circle cx="2867" cy="152" r="1.5" fill-opacity="0.30"/><circle cx="2863" cy="838" r="0.8" fill-opacity="0.39"/><circle cx="2871" cy="1238" r="1.0" fill-opacity="0.29"/><circle cx="2871" cy="899" r="0.6" fill-opacity="0.60"/><circle cx="2871" cy="784" r="0.8" fill-opacity="0.88"/><circle cx="2872" cy="373" r="1.5" fill-opacity="0.39"/><circle cx="2877" cy="1310" r="0.6" fill-opacity="0.39"/><circle cx="2866" cy="1313" r="0.8" fill-opacity="0.29"/><circle cx="2874" cy="1174" r="0.9" fill-opacity="0.50"/><circle cx="2879" cy="663" r="0.6" fill-opacity="0.77"/><circle cx="2879" cy="534" r="0.6" fill-opacity="0.67"/><circle cx="2873" cy="699" r="1.2" fill-opacity="0.65"/><circle cx="2866" cy="997" r="0.7" fill-opacity="0.43"/><circle cx="2866" cy="1192" r="0.9" fill-opacity="0.76"/><circle cx="2876" cy="1204" r="0.7" fill-opacity="0.61"/><circle cx="2875" cy="1576" r="0.6" fill-opacity="0.85"/><circle cx="2875" cy="1166" r="0.7" fill-opacity="0.52"/><circle cx="2877" cy="1039" r="1.0" fill-opacity="0.42"/><circle cx="2869" cy="265" r="0.8" fill-opacity="0.45"/><circle cx="2864" cy="284" r="0.6" fill-opacity="0.77"/><circle cx="2871" cy="165" r="0.7" fill-opacity="0.49"/><circle cx="2878" cy="787" r="0.8" fill-opacity="0.77"/><circle cx="2871" cy="1331" r="0.6" fill-opacity="0.59"/><circle cx="2867" cy="630" r="1.2" fill-opacity="0.26"/><circle cx="2878" cy="1151" r="1.0" fill-opacity="0.53"/><circle cx="2875" cy="622" r="1.5" fill-opacity="0.53"/><circle cx="2865" cy="180" r="1.0" fill-opacity="0.50"/><circle cx="2863" cy="1345" r="0.9" fill-opacity="0.76"/><circle cx="2866" cy="928" r="1.5" fill-opacity="0.46"/></g></svg><div class="win" style="left:18px;top:15px;width:2845px;height:53px"></div><div class="win" style="left:18px;top:86px;width:2845px;height:749px"></div><div class="win" style="left:18px;top:853px;width:2845px;height:750px"></div><div class="r" style="left:41.5px;top:34px;width:17.5px;height:17.5px;border-radius:50%;background:#9f9787"></div><div class="r" style="left:86.5px;top:34px;width:17.5px;height:17.5px;border-radius:50%;background:#9f9787"></div><div class="r" style="left:131.5px;top:34px;width:17.5px;height:17.5px;border-radius:50%;background:#9f9787"></div><div class="r" style="left:176.5px;top:34px;width:17.5px;height:17.5px;border-radius:50%;background:#e8c38a"></div><div class="r" style="left:221.5px;top:34px;width:17.5px;height:17.5px;border-radius:50%;background:#9f9787"></div><div class="bt" style="left:1311px;top:18px;">01.09.27 LND/GMT+01</div><div class="bt" style="left:1749px;top:18px;">196.0B/s</div><svg style="left:1872px;top:36px" width="11" height="13"><path d="M5.2,0 V11.5 M0.8,7.5 L5.2,12 L9.6,7.5" fill="none" stroke="#a39c8c" stroke-width="1.7"/></svg><svg style="left:1910px;top:32px" width="18" height="17"><path d="M1,1 V16 M4,1 V16 M7,16 L14,1 M5,6.5 H17 M5,10.5 H17" fill="none" stroke="#a39c8c" stroke-width="1.6"/></svg><div class="r" style="left:1962px;top:28px;width:2px;height:27px;background:#a39c8c"></div><svg style="left:1997px;top:36px" width="13" height="13"><path d="M6.2,1.5 L11.5,11.5 H0.9 Z" fill="none" stroke="#a39c8c" stroke-width="1.7"/></svg><div class="bt" style="left:2023px;top:18px;">54°C</div><svg style="left:2103px;top:33px" width="17" height="18"><path d="M0.8,16 H5.6 V13.9 A6.7,6.7 0 1 1 10.8,13.9 V16 H15.8" fill="none" stroke="#a39c8c" stroke-width="1.8"/></svg><div class="bt" style="left:2133px;top:18px;">78%</div><svg style="left:2200px;top:34px" width="18" height="18"><g fill="#a39c8c"><rect x="7.3" y="0" width="3" height="4" transform="rotate(0 8.8 8.8)"/><rect x="7.3" y="0" width="3" height="4" transform="rotate(45 8.8 8.8)"/><rect x="7.3" y="0" width="3" height="4" transform="rotate(90 8.8 8.8)"/><rect x="7.3" y="0" width="3" height="4" transform="rotate(135 8.8 8.8)"/><rect x="7.3" y="0" width="3" height="4" transform="rotate(180 8.8 8.8)"/><rect x="7.3" y="0" width="3" height="4" transform="rotate(225 8.8 8.8)"/><rect x="7.3" y="0" width="3" height="4" transform="rotate(270 8.8 8.8)"/><rect x="7.3" y="0" width="3" height="4" transform="rotate(315 8.8 8.8)"/></g><circle cx="8.8" cy="8.8" r="5.2" fill="none" stroke="#a39c8c" stroke-width="2.4"/><circle cx="8.8" cy="8.8" r="1.6" fill="#a39c8c"/></svg><div class="bt" style="left:2231px;top:18px;">3%</div><svg style="left:2286px;top:35px" width="18" height="15"><g fill="#a39c8c"><rect x="0.0" y="0" width="3" height="2.6"/><rect x="4.5" y="0" width="3" height="2.6"/><rect x="9.0" y="0" width="3" height="2.6"/><rect x="13.5" y="0" width="3" height="2.6"/><rect x="0.0" y="4" width="3" height="2.6"/><rect x="4.5" y="4" width="3" height="2.6"/><rect x="9.0" y="4" width="3" height="2.6"/><rect x="13.5" y="4" width="3" height="2.6"/><rect x="0.0" y="8" width="3" height="2.6"/><rect x="4.5" y="8" width="3" height="2.6"/><rect x="9.0" y="8" width="3" height="2.6"/><rect x="13.5" y="8" width="3" height="2.6"/><rect x="0.0" y="12" width="3" height="2.6"/><rect x="4.5" y="12" width="3" height="2.6"/><rect x="9.0" y="12" width="3" height="2.6"/><rect x="13.5" y="12" width="3" height="2.6"/></g></svg><div class="bt" style="left:2317px;top:18px;">29%</div><svg style="left:2385px;top:36px" width="18" height="16"><path d="M8.5,0.3 L16,4.3 V12.3 L8.5,16.3 L1,12.3 V4.3 Z" fill="#a39c8c"/></svg><div class="bt" style="left:2416px;top:18px;">32%</div><div class="r" style="left:2490px;top:28px;width:2px;height:27px;background:#a39c8c"></div><svg style="left:2526px;top:33px" width="17" height="17"><circle cx="8.3" cy="8" r="3.5" fill="#a39c8c"/><g stroke="#a39c8c" stroke-width="1.5"><line x1="13.10" y1="8.00" x2="16.30" y2="8.00"/><line x1="11.69" y1="11.39" x2="13.96" y2="13.66"/><line x1="8.30" y1="12.80" x2="8.30" y2="16.00"/><line x1="4.91" y1="11.39" x2="2.64" y2="13.66"/><line x1="3.50" y1="8.00" x2="0.30" y2="8.00"/><line x1="4.91" y1="4.61" x2="2.64" y2="2.34"/><line x1="8.30" y1="3.20" x2="8.30" y2="0.00"/><line x1="11.69" y1="4.61" x2="13.96" y2="2.34"/></g></svg><div class="bt" style="left:2558px;top:18px;">100%</div><svg style="left:2639px;top:37px" width="15" height="12"><path d="M1,9 C2,0 5.5,0 7.2,5.5 C9,11 12.5,11 14,2" fill="none" stroke="#a39c8c" stroke-width="1.7"/></svg><div class="bt" style="left:2670px;top:18px;">35%</div><div class="r" style="left:2743px;top:28px;width:2px;height:27px;background:#a39c8c"></div><div class="bt" style="left:2778px;top:18px;">gb</div><svg style="left:2832px;top:34px" width="16" height="17"><path d="M1,1 H14.5 M1,1 V11 H14.5 M1,13.5 H14.5 M1,16 H14.5 M4,4 H14.5" fill="none" stroke="#a39c8c" stroke-width="1.6"/></svg><svg style="left:96px;top:114px" width="26" height="16"><rect x="0" y="0" width="24" height="15" rx="1.5" fill="#d4d8da"/><path d="M4,12 V4 L7.2,8 L10.4,4 V12" stroke="#0a0e12" stroke-width="2.4" fill="none" stroke-linejoin="miter"/><path d="M16.2,3.5 V8.5" stroke="#0a0e12" stroke-width="2.2"/><path d="M12.8,8 H19.6 L16.2,12 Z" fill="#0a0e12"/></svg><div class="t " style="left:124px;top:107px;font-weight:bold;color:#d8dcde">03-tools.md</div><svg style="left:334px;top:114px" width="16" height="16"><path d="M1.5,1.5 L13.5,13.5 M13.5,1.5 L1.5,13.5" stroke="#5c636a" stroke-width="1.8"/></svg><div class="t " style="left:82px;top:136px;color:#5d6468">1</div><div class="t " style="left:138px;top:136px;color:#7b8288">---</div><div class="r" style="left:138px;top:137px;width:14px;height:28px;border:2px solid #e2e4e6"></div><div class="t " style="left:110px;top:165px;color:#5d6468">1</div><div class="t " style="left:138px;top:165px;"><i style="color:#a2aabb">layout: </i><i style="color:#a3ac8e">default</i></div><div class="t " style="left:110px;top:194px;color:#5d6468">2</div><div class="t " style="left:138px;top:194px;"><i style="color:#a2aabb">title: </i><i style="color:#a3ac8e">Tools</i></div><div class="t " style="left:110px;top:223px;color:#5d6468">3</div><div class="t " style="left:138px;top:223px;"><i style="color:#a2aabb">nav_order: </i><i style="color:#c0a6c4">4</i></div><div class="t " style="left:110px;top:252px;color:#5d6468">4</div><div class="t " style="left:138px;top:252px;"><i style="color:#a2aabb">permalink: </i><i style="color:#a3ac8e">/tools/</i></div><div class="t " style="left:110px;top:281px;color:#5d6468">5</div><div class="r" style="left:138px;top:294px;width:2688px;height:2px;background:#6b7178"></div><div class="t " style="left:110px;top:310px;color:#5d6468">6</div><svg style="left:54px;top:339px" width="20" height="29"><path d="M1.6,8.3 L12.6,8.3 L16.8,14.2 L12.6,20.1 L1.6,20.1 L5.9,14.2 Z" fill="none" stroke="#b4c0c8" stroke-width="2.2" stroke-linejoin="miter"/></svg><div class="t " style="left:110px;top:339px;color:#5d6468">7</div><div class="r" style="left:138px;top:339px;width:2688px;height:29px;background:#2a3227"></div><svg style="left:138px;top:339px" width="22" height="29"><circle cx="9.8" cy="14.2" r="8.9" fill="none" stroke="#c0cac8" stroke-width="1.9"/><text x="9.8" y="20" text-anchor="middle" font-family="Liberation Sans" font-weight="bold" font-size="15" fill="#c0cac8">1</text></svg><div class="t " style="left:166px;top:339px;color:#c4ccca">Tools</div><div class="t " style="left:110px;top:368px;color:#5d6468">8</div><div class="t " style="left:110px;top:397px;color:#5d6468">9</div><div class="t " style="left:138px;top:397px;">Rhodium includes a comprehensive suite of tools carefully selected for professional workflows.</div><div class="t " style="left:96px;top:426px;color:#5d6468">10</div><svg style="left:54px;top:455px" width="20" height="29"><path d="M1.6,8.3 L12.6,8.3 L16.8,14.2 L12.6,20.1 L1.6,20.1 L5.9,14.2 Z" fill="none" stroke="#b4c0c8" stroke-width="2.2" stroke-linejoin="miter"/></svg><div class="t " style="left:96px;top:455px;color:#5d6468">11</div><div class="r" style="left:138px;top:455px;width:2688px;height:29px;background:#232436"></div><svg style="left:152px;top:455px" width="22" height="29"><circle cx="9.8" cy="14.2" r="8.9" fill="none" stroke="#a8b4c0" stroke-width="1.9"/><text x="9.8" y="20" text-anchor="middle" font-family="Liberation Sans" font-weight="bold" font-size="15" fill="#a8b4c0">2</text></svg><div class="t " style="left:180px;top:455px;color:#a8b4c0">Main Tools</div><div class="t " style="left:96px;top:484px;color:#5d6468">12</div><svg style="left:54px;top:513px" width="20" height="29"><path d="M1.6,8.3 L12.6,8.3 L16.8,14.2 L12.6,20.1 L1.6,20.1 L5.9,14.2 Z" fill="none" stroke="#b4c0c8" stroke-width="2.2" stroke-linejoin="miter"/></svg><div class="t " style="left:96px;top:513px;color:#5d6468">13</div><div class="r" style="left:138px;top:513px;width:2688px;height:29px;background:#4a232c"></div><svg style="left:166px;top:513px" width="22" height="29"><circle cx="9.8" cy="14.2" r="8.9" fill="none" stroke="#dc4c5c" stroke-width="1.9"/><text x="9.8" y="20" text-anchor="middle" font-family="Liberation Sans" font-weight="bold" font-size="15" fill="#dc4c5c">3</text></svg><div class="t " style="left:194px;top:513px;color:#dc4c5c">Window Managers</div><div class="t " style="left:96px;top:542px;color:#5d6468">14</div><div class="r" style="left:139px;top:549px;width:14px;height:14px;border-radius:50%;background:#d8dcdc"></div><svg style="left:166px;top:542px" width="24" height="29" viewBox="0 0 24 29"><path d="M10.5,4.5 a9.5,9.5 0 0 0 -3,18.5 c0.5,0.1 0.6,-0.2 0.6,-0.5 v-1.7 c-2.6,0.6 -3.2,-1.2 -3.2,-1.2 c-0.4,-1.1 -1,-1.4 -1,-1.4 c-0.9,-0.6 0.1,-0.6 0.1,-0.6 c0.9,0.1 1.5,1 1.5,1 c0.8,1.5 2.2,1 2.7,0.8 c0.1,-0.6 0.3,-1 0.6,-1.2 c-2.1,-0.2 -4.3,-1.1 -4.3,-4.7 c0,-1 0.4,-1.9 1,-2.6 c-0.1,-0.2 -0.4,-1.2 0.1,-2.6 c0,0 0.8,-0.3 2.6,1 a9,9 0 0 1 4.8,0 c1.8,-1.2 2.6,-1 2.6,-1 c0.5,1.4 0.2,2.4 0.1,2.6 c0.6,0.7 1,1.6 1,2.6 c0,3.7 -2.2,4.5 -4.3,4.7 c0.3,0.3 0.6,0.9 0.6,1.8 v2.6 c0,0.3 0.2,0.6 0.7,0.5 a9.5,9.5 0 0 0 -3,-18.5 z" fill="#d4c294"/></svg><div class="t " style="left:194px;top:542px;color:#d4c294">Niri</div><div class="r" style="left:166px;top:568px;width:84px;height:2px;background:#d4c294"></div><div class="t " style="left:264px;top:542px;color:#c8ccd0">|</div><svg style="left:292px;top:542px" width="24" height="29"><g fill="none" stroke="#d4c294" stroke-width="1.9"><circle cx="10.5" cy="14" r="8.8"/><ellipse cx="10.5" cy="14" rx="4" ry="8.8"/><path d="M1.7,14 H19.3 M3,9.5 H18 M3,18.5 H18"/></g></svg><div class="t " style="left:320px;top:542px;color:#d4c294">Hyprland</div><div class="r" style="left:292px;top:568px;width:200px;height:2px;background:#d4c294"></div><div class="t " style="left:96px;top:571px;color:#5d6468">15</div><div class="r" style="left:167px;top:579px;width:14px;height:14px;border-radius:50%;border:1.6px solid #c4c8cc"></div><div class="t " style="left:194px;top:571px;">Mnemonic keybindings</div><div class="t " style="left:96px;top:600px;color:#5d6468">16</div><div class="r" style="left:167px;top:608px;width:14px;height:14px;border-radius:50%;border:1.6px solid #c4c8cc"></div><div class="t " style="left:194px;top:600px;">Dynamic & static</div><div class="t " style="left:96px;top:629px;color:#5d6468">17</div><div class="r" style="left:167px;top:637px;width:14px;height:14px;border-radius:50%;border:1.6px solid #c4c8cc"></div><div class="t " style="left:194px;top:629px;">Preconfigured A</div><div class="t " style="left:96px;top:658px;color:#5d6468">18</div><div class="r" style="left:167px;top:666px;width:14px;height:14px;border-radius:50%;border:1.6px solid #c4c8cc"></div><div class="t " style="left:194px;top:658px;">Preconfigured B</div><div class="t " style="left:96px;top:687px;color:#5d6468">19</div><div class="r" style="left:167px;top:695px;width:14px;height:14px;border-radius:50%;border:1.6px solid #c4c8cc"></div><div class="t " style="left:194px;top:687px;">Multi-monitor</div><div class="r" style="left:139px;top:569px;width:2px;height:145px;background:#3a4046"></div><div class="t " style="left:96px;top:716px;color:#5d6468">20</div><svg style="left:54px;top:745px" width="20" height="29"><path d="M1.6,8.3 L12.6,8.3 L16.8,14.2 L12.6,20.1 L1.6,20.1 L5.9,14.2 Z" fill="none" stroke="#b4c0c8" stroke-width="2.2" stroke-linejoin="miter"/></svg><div class="t " style="left:96px;top:745px;color:#5d6468">21</div><div class="r" style="left:138px;top:745px;width:2688px;height:29px;background:#4a232c"></div><svg style="left:166px;top:745px" width="22" height="29"><circle cx="9.8" cy="14.2" r="8.9" fill="none" stroke="#dc4c5c" stroke-width="1.9"/><text x="9.8" y="20" text-anchor="middle" font-family="Liberation Sans" font-weight="bold" font-size="15" fill="#dc4c5c">3</text></svg><div class="t " style="left:194px;top:745px;color:#dc4c5c">Bars & Widgets</div><div class="r" style="left:54px;top:774px;width:56px;height:29px;background:#d67a72"></div><div class="t " style="left:68px;top:774px;color:#2a1c1c">Rh</div><div class="t " style="left:124px;top:774px;color:#b4b9ba">NOR</div><div class="t " style="left:194px;top:774px;color:#a9afb0">03-tools.md</div><div class="t " style="left:2504px;top:774px;color:#aab0b2">UTF-8  UNIX  MARKDOWN</div><div class="r" style="left:2812px;top:774px;width:14px;height:29px;background:#b4b8ba"></div><div class="r" style="left:54px;top:875px;width:140px;height:29px;background:#c9cdcd"></div><div class="t " style="left:68px;top:875px;color:#0e1114">1 assets</div><div class="r" style="left:60px;top:917px;width:2761px;height:2px;background:#d0d4d8"></div><div class="r" style="left:60px;top:1526px;width:2761px;height:2px;background:#d0d4d8"></div><div class="r" style="left:60px;top:917px;width:2px;height:611px;background:#d0d4d8"></div><div class="r" style="left:2819px;top:917px;width:2px;height:611px;background:#d0d4d8"></div><div class="r" style="left:396px;top:917px;width:2px;height:609px;background:#d0d4d8"></div><div class="r" style="left:1796px;top:917px;width:2px;height:609px;background:#d0d4d8"></div><div class="r" style="left:68px;top:933px;width:322px;height:29px;background:linear-gradient(90deg,#8fa4b0 0%,#8fa4b0 80%,#7d919c 100%)"></div><svg style="left:82px;top:933px" width="24" height="29"><path d="M0,7.5 H8 L10.5,10 H22 V23 H0 Z" fill="#0c1014"/></svg><div class="t " style="left:110px;top:933px;color:#16202a">assets</div><svg style="left:82px;top:962px" width="24" height="29"><path d="M0,7.5 H8 L10.5,10 H22 V23 H0 Z" fill="#8fa3ae"/></svg><div class="t " style="left:110px;top:962px;color:#8fa3ae">build</div><svg style="left:82px;top:991px" width="24" height="29"><path d="M0,7.5 H8 L10.5,10 H22 V23 H0 Z" fill="#8fa3ae"/></svg><div class="t " style="left:110px;top:991px;color:#8fa3ae">data</div><svg style="left:82px;top:1020px" width="24" height="29"><path d="M0,7.5 H8 L10.5,10 H22 V23 H0 Z" fill="#8fa3ae"/></svg><div class="t " style="left:110px;top:1020px;color:#8fa3ae">devshells</div><svg style="left:82px;top:1049px" width="24" height="29"><path d="M0,7.5 H8 L10.5,10 H22 V23 H0 Z" fill="#8fa3ae"/></svg><div class="t " style="left:110px;top:1049px;color:#8fa3ae">docs</div><svg style="left:82px;top:1078px" width="24" height="29"><path d="M0,7.5 H8 L10.5,10 H22 V23 H0 Z" fill="#8fa3ae"/></svg><div class="t " style="left:110px;top:1078px;color:#8fa3ae">home</div><svg style="left:82px;top:1107px" width="24" height="29"><path d="M0,7.5 H8 L10.5,10 H22 V23 H0 Z" fill="#8fa3ae"/></svg><div class="t " style="left:110px;top:1107px;color:#8fa3ae">hosts</div><svg style="left:82px;top:1136px" width="24" height="29"><path d="M0,7.5 H8 L10.5,10 H22 V23 H0 Z" fill="#8fa3ae"/></svg><div class="t " style="left:110px;top:1136px;color:#8fa3ae">lib</div><svg style="left:82px;top:1165px" width="24" height="29"><path d="M0,7.5 H8 L10.5,10 H22 V23 H0 Z" fill="#8fa3ae"/></svg><div class="t " style="left:110px;top:1165px;color:#8fa3ae">modules</div><svg style="left:82px;top:1194px" width="24" height="29"><path d="M0,7.5 H8 L10.5,10 H22 V23 H0 Z" fill="#8fa3ae"/></svg><div class="t " style="left:110px;top:1194px;color:#8fa3ae">overlays</div><svg style="left:82px;top:1223px" width="24" height="29"><path d="M0,7.5 H8 L10.5,10 H22 V23 H0 Z" fill="#8fa3ae"/></svg><div class="t " style="left:110px;top:1223px;color:#8fa3ae">samples</div><svg style="left:82px;top:1252px" width="24" height="29"><path d="M0,7.5 H8 L10.5,10 H22 V23 H0 Z" fill="#8fa3ae"/></svg><div class="t " style="left:110px;top:1252px;color:#8fa3ae">users</div><svg style="left:82px;top:1281px" width="24" height="29"><path d="M5,13 V10 a5.5,5.5 0 0 1 11,0 V13" fill="none" stroke="#c8c8c8" stroke-width="2.6"/><rect x="1.5" y="13" width="18" height="11" rx="1" fill="#c8c8c8"/></svg><div class="t " style="left:110px;top:1281px;">flake.lock</div><svg style="left:82px;top:1310px" width="24" height="29"><g fill="none" stroke="#3f6189" stroke-width="2.6" stroke-linecap="round"><path d="M12.27,16.10 L17.12,18.90 M14.87,17.60 L15.01,20.60"/><path d="M9.50,17.70 L9.50,23.30 M9.50,20.70 L6.98,22.32"/><path d="M6.73,16.10 L1.88,18.90 M4.13,17.60 L1.46,16.22"/><path d="M6.73,12.90 L1.88,10.10 M4.13,11.40 L3.99,8.40"/><path d="M9.50,11.30 L9.50,5.70 M9.50,8.30 L12.02,6.68"/><path d="M12.27,12.90 L17.12,10.10 M14.87,11.40 L17.54,12.78"/></g></svg><div class="t " style="left:110px;top:1310px;">flake.nix</div><svg style="left:82px;top:1339px" width="24" height="29"><path d="M20,5 C14,5 9,9 6,16 L9,19 C16,16 20,11 20,5 Z" fill="#8d9ea6"/><path d="M6,16 L2,17 L5,13 Z M9,19 L8,23 L12,20 Z M5,19 L1,24 M7,21 L3,25" fill="#8d9ea6" stroke="#8d9ea6" stroke-width="1.5"/><circle cx="14" cy="11" r="1.8" fill="#0a0e12"/></svg><div class="t " style="left:110px;top:1339px;">justfile</div><svg style="left:82px;top:1368px" width="24" height="29"><g fill="none" stroke="#dcc83e" stroke-width="2.6" stroke-linecap="round"><circle cx="8" cy="8" r="3"/><path d="M6,11 L3.5,22 M4.6,17 L2,18 M10,11 L12,24 M11,18.5 L13.5,19.5"/></g><circle cx="5" cy="14" r="3.2" fill="#dcc83e"/><circle cx="11" cy="14.5" r="3.2" fill="#dcc83e"/></svg><div class="t " style="left:110px;top:1368px;">LICENSE</div><svg style="left:82px;top:1397px" width="24" height="29"><path d="M0,6 H16 a2,2 0 0 1 2,2 V22 a2,2 0 0 1 -2,2 H2 a2,2 0 0 1 -2,-2 Z M6,6 V13 L8.5,11 L11,13 V6 Z" fill="#e2e4e6" fill-rule="evenodd"/></svg><div class="t " style="left:110px;top:1397px;">README.md</div><div class="r" style="left:124px;top:1543px;width:966px;height:27px;background:#0c0c0e"></div><div class="r" style="left:2308px;top:1543px;width:504px;height:27px;background:#0c0c0e"></div><div class="r" style="left:54px;top:1542px;width:56px;height:29px;background:#d67a72"></div><div class="t " style="left:68px;top:1542px;color:#2a1c1c">Rh</div><div class="t " style="left:124px;top:1542px;color:#c8ccce">NORMAL</div><div class="t " style="left:250px;top:1542px;color:#c8ccce">381B</div><div class="t " style="left:348px;top:1542px;color:#c8ccce">~/dev/rhodium/assets/calvin-m-wrapped.txt</div><div class="r" style="left:228px;top:1542px;width:2px;height:29px;background:#d4d8da"></div><div class="r" style="left:326px;top:1542px;width:2px;height:29px;background:#d4d8da"></div><div class="r" style="left:942px;top:1542px;width:2px;height:29px;background:#d4d8da"></div><div class="r" style="left:2482px;top:1542px;width:2px;height:29px;background:#d4d8da"></div><div class="r" style="left:2594px;top:1542px;width:2px;height:29px;background:#d4d8da"></div><div class="r" style="left:2706px;top:1542px;width:2px;height:29px;background:#d4d8da"></div><div class="r" style="left:965px;top:1550px;width:14px;height:14px;border-radius:50%;background:#d8c496"></div><div class="t " style="left:992px;top:1542px;color:#d8c496">0</div><svg style="left:1034px;top:1542px" width="16" height="29"><g fill="none" stroke="#d4868a" stroke-width="1.8"><circle cx="7.2" cy="15.5" r="5.2"/><path d="M1.2,21.8 L13.4,9.4"/></g></svg><div class="t " style="left:1062px;top:1542px;color:#d4868a">0</div><div class="t " style="left:2322px;top:1542px;"><span style="color:#c8ccce">-</span><span style="color:#c9b88e">r</span><span style="color:#d47a80">w</span><span style="color:#c8ccce">-</span><span style="color:#c9b88e">r</span><span style="color:#c8ccce">--</span><span style="color:#c9b88e">r</span><span style="color:#c8ccce">--</span></div><svg style="left:2504px;top:1542px" width="16" height="29"><path d="M1,5 H9 L15,11 V23 a1.5,1.5 0 0 1 -1.5,1.5 H2.5 A1.5,1.5 0 0 1 1,23 Z" fill="#d0d4d6"/><path d="M4,16 H12 M4,19.5 H10" stroke="#0a0e12" stroke-width="1.6"/><path d="M9,5 V11 H15" fill="#0a0e12"/></svg><div class="t " style="left:2532px;top:1542px;color:#c8ccce">txt</div><div class="t " style="left:2630px;top:1542px;color:#c8ccce">50%</div><div class="t " style="left:2756px;top:1542px;color:#c8ccce">3/6</div><div class="r" style="left:360px;top:441px;width:2162px;height:805px;background:#1f131d;border:1.4px solid #6e4d60"></div><div class="pt" style="left:422px;top:472px;color:#7a7f88">σ:</div><div class="r" style="left:469px;top:472px;width:3px;height:34px;background:#7c8490"></div><div class="pt" style="left:2382px;top:472px;color:#b4b8bc">55/55</div><div class="r" style="left:401px;top:536px;width:2080px;height:34px;background:#48263f"></div><svg style="left:422px;top:536px" width="16" height="34"><path d="M7.6,11 V16.6 M7.6,20.2 V26.2 M0,18.4 H5.8 M9.4,18.4 H15.4" stroke="#f2eaf0" stroke-width="2"/></svg><div class="pt" style="left:454px;top:536px;color:#f2eaf0">blueman-applet.service</div><svg style="left:1270px;top:536px" width="16" height="34"><path d="M0.2,9 H15.2 L7.7,24.3 Z" fill="#f2eaf0"/></svg><div class="pt" style="left:1302px;top:536px;color:#f2eaf0">Stopped</div><div class="pt" style="left:1478px;top:536px;color:#f2eaf0">Bluetooth management applet</div><svg style="left:422px;top:570px" width="16" height="34"><path d="M7.6,11 V16.6 M7.6,20.2 V26.2 M0,18.4 H5.8 M9.4,18.4 H15.4" stroke="#f2eaf0" stroke-width="2"/></svg><div class="pt" style="left:454px;top:570px;color:#f2eaf0">blueman-manager.service</div><svg style="left:1270px;top:570px" width="16" height="34"><path d="M0.2,9 H15.2 L7.7,24.3 Z" fill="#f2eaf0"/></svg><div class="pt" style="left:1302px;top:570px;color:#f2eaf0">Stopped</div><div class="pt" style="left:1478px;top:570px;color:#f2eaf0">Bluetooth Manager</div><svg style="left:422px;top:604px" width="16" height="34"><path d="M7.6,11 V16.6 M7.6,20.2 V26.2 M0,18.4 H5.8 M9.4,18.4 H15.4" stroke="#f2eaf0" stroke-width="2"/></svg><div class="pt" style="left:454px;top:604px;color:#f2eaf0">dbus-broker.service</div><svg style="left:1270px;top:604px" width="16" height="34"><path d="M0.2,9 H15.2 L7.7,24.3 Z" fill="#f2eaf0"/></svg><div class="pt" style="left:1302px;top:604px;color:#f2eaf0">Stopped</div><div class="pt" style="left:1478px;top:604px;color:#f2eaf0">No description</div><svg style="left:422px;top:638px" width="16" height="34"><path d="M7.6,11 V16.6 M7.6,20.2 V26.2 M0,18.4 H5.8 M9.4,18.4 H15.4" stroke="#f2eaf0" stroke-width="2"/></svg><div class="pt" style="left:454px;top:638px;color:#f2eaf0">dbus-org.bluez.obex.service</div><svg style="left:1270px;top:638px" width="16" height="34"><path d="M0.2,9 H15.2 L7.7,24.3 Z" fill="#f2eaf0"/></svg><div class="pt" style="left:1302px;top:638px;color:#f2eaf0">Stopped</div><div class="pt" style="left:1478px;top:638px;color:#f2eaf0">No description</div><svg style="left:422px;top:672px" width="16" height="34"><path d="M7.6,11 V16.6 M7.6,20.2 V26.2 M0,18.4 H5.8 M9.4,18.4 H15.4" stroke="#f2eaf0" stroke-width="2"/></svg><div class="pt" style="left:454px;top:672px;color:#f2eaf0">dbus.service</div><svg style="left:1270px;top:672px" width="16" height="34"><path d="M7.7,7.2 L15.2,24.6 H0.2 Z" fill="#f2eaf0"/></svg><div class="pt" style="left:1302px;top:672px;color:#f2eaf0">Running</div><div class="pt" style="left:1478px;top:672px;color:#f2eaf0">D-Bus User Message Bus</div><svg style="left:422px;top:706px" width="16" height="34"><path d="M7.6,11 V16.6 M7.6,20.2 V26.2 M0,18.4 H5.8 M9.4,18.4 H15.4" stroke="#f2eaf0" stroke-width="2"/></svg><div class="pt" style="left:454px;top:706px;color:#f2eaf0">dconf.service</div><svg style="left:1270px;top:706px" width="16" height="34"><path d="M7.7,7.2 L15.2,24.6 H0.2 Z" fill="#f2eaf0"/></svg><div class="pt" style="left:1302px;top:706px;color:#f2eaf0">Running</div><div class="pt" style="left:1478px;top:706px;color:#f2eaf0">User preferences database</div><svg style="left:422px;top:740px" width="16" height="34"><path d="M7.6,11 V16.6 M7.6,20.2 V26.2 M0,18.4 H5.8 M9.4,18.4 H15.4" stroke="#f2eaf0" stroke-width="2"/></svg><div class="pt" style="left:454px;top:740px;color:#f2eaf0">emacs.service</div><svg style="left:1270px;top:740px" width="16" height="34"><path d="M7.7,7.2 L15.2,24.6 H0.2 Z" fill="#f2eaf0"/></svg><div class="pt" style="left:1302px;top:740px;color:#f2eaf0">Running</div><div class="pt" style="left:1478px;top:740px;color:#f2eaf0">Emacs text editor</div><svg style="left:422px;top:774px" width="16" height="34"><path d="M7.6,11 V16.6 M7.6,20.2 V26.2 M0,18.4 H5.8 M9.4,18.4 H15.4" stroke="#f2eaf0" stroke-width="2"/></svg><div class="pt" style="left:454px;top:774px;color:#f2eaf0">filter-chain.service</div><svg style="left:1270px;top:774px" width="16" height="34"><path d="M0.2,9 H15.2 L7.7,24.3 Z" fill="#f2eaf0"/></svg><div class="pt" style="left:1302px;top:774px;color:#f2eaf0">Stopped</div><div class="pt" style="left:1478px;top:774px;color:#f2eaf0">PipeWire filter chain daemon</div><svg style="left:422px;top:808px" width="16" height="34"><path d="M7.6,11 V16.6 M7.6,20.2 V26.2 M0,18.4 H5.8 M9.4,18.4 H15.4" stroke="#f2eaf0" stroke-width="2"/></svg><div class="pt" style="left:454px;top:808px;color:#f2eaf0">flatpak-oci-authenticator.service</div><svg style="left:1270px;top:808px" width="16" height="34"><path d="M0.2,9 H15.2 L7.7,24.3 Z" fill="#f2eaf0"/></svg><div class="pt" style="left:1302px;top:808px;color:#f2eaf0">Stopped</div><div class="pt" style="left:1478px;top:808px;color:#f2eaf0">flatpak oci authenticator</div><svg style="left:422px;top:842px" width="16" height="34"><path d="M7.6,11 V16.6 M7.6,20.2 V26.2 M0,18.4 H5.8 M9.4,18.4 H15.4" stroke="#f2eaf0" stroke-width="2"/></svg><div class="pt" style="left:454px;top:842px;color:#f2eaf0">flatpak-portal.service</div><svg style="left:1270px;top:842px" width="16" height="34"><path d="M0.2,9 H15.2 L7.7,24.3 Z" fill="#f2eaf0"/></svg><div class="pt" style="left:1302px;top:842px;color:#f2eaf0">Stopped</div><div class="pt" style="left:1478px;top:842px;color:#f2eaf0">flatpak portal</div><svg style="left:422px;top:876px" width="16" height="34"><path d="M7.6,11 V16.6 M7.6,20.2 V26.2 M0,18.4 H5.8 M9.4,18.4 H15.4" stroke="#f2eaf0" stroke-width="2"/></svg><div class="pt" style="left:454px;top:876px;color:#f2eaf0">flatpak-session-helper.service</div><svg style="left:1270px;top:876px" width="16" height="34"><path d="M0.2,9 H15.2 L7.7,24.3 Z" fill="#f2eaf0"/></svg><div class="pt" style="left:1302px;top:876px;color:#f2eaf0">Stopped</div><div class="pt" style="left:1478px;top:876px;color:#f2eaf0">flatpak session helper</div><svg style="left:422px;top:910px" width="16" height="34"><path d="M7.6,11 V16.6 M7.6,20.2 V26.2 M0,18.4 H5.8 M9.4,18.4 H15.4" stroke="#f2eaf0" stroke-width="2"/></svg><div class="pt" style="left:454px;top:910px;color:#f2eaf0">foot-server.service</div><svg style="left:1270px;top:910px" width="16" height="34"><path d="M0.2,9 H15.2 L7.7,24.3 Z" fill="#f2eaf0"/></svg><div class="pt" style="left:1302px;top:910px;color:#f2eaf0">Stopped</div><div class="pt" style="left:1478px;top:910px;color:#f2eaf0">Foot terminal server mode</div><svg style="left:422px;top:944px" width="16" height="34"><path d="M7.6,11 V16.6 M7.6,20.2 V26.2 M0,18.4 H5.8 M9.4,18.4 H15.4" stroke="#f2eaf0" stroke-width="2"/></svg><div class="pt" style="left:454px;top:944px;color:#f2eaf0">gnome-keyring.service</div><svg style="left:1270px;top:944px" width="16" height="34"><path d="M7.7,7.2 L15.2,24.6 H0.2 Z" fill="#f2eaf0"/></svg><div class="pt" style="left:1302px;top:944px;color:#f2eaf0">Running</div><div class="pt" style="left:1478px;top:944px;color:#f2eaf0">GNOME Keyring</div><svg style="left:422px;top:978px" width="16" height="34"><path d="M7.6,11 V16.6 M7.6,20.2 V26.2 M0,18.4 H5.8 M9.4,18.4 H15.4" stroke="#f2eaf0" stroke-width="2"/></svg><div class="pt" style="left:454px;top:978px;color:#f2eaf0">gvfs-afc-volume-monitor.service</div><svg style="left:1270px;top:978px" width="16" height="34"><path d="M7.7,7.2 L15.2,24.6 H0.2 Z" fill="#f2eaf0"/></svg><div class="pt" style="left:1302px;top:978px;color:#f2eaf0">Running</div><div class="pt" style="left:1478px;top:978px;color:#f2eaf0">Virtual filesystem service - Apple File Conduit monitor</div><svg style="left:422px;top:1012px" width="16" height="34"><path d="M7.6,11 V16.6 M7.6,20.2 V26.2 M0,18.4 H5.8 M9.4,18.4 H15.4" stroke="#f2eaf0" stroke-width="2"/></svg><div class="pt" style="left:454px;top:1012px;color:#f2eaf0">gvfs-daemon.service</div><svg style="left:1270px;top:1012px" width="16" height="34"><path d="M7.7,7.2 L15.2,24.6 H0.2 Z" fill="#f2eaf0"/></svg><div class="pt" style="left:1302px;top:1012px;color:#f2eaf0">Running</div><div class="pt" style="left:1478px;top:1012px;color:#f2eaf0">Virtual filesystem service</div><svg style="left:422px;top:1046px" width="16" height="34"><path d="M7.6,11 V16.6 M7.6,20.2 V26.2 M0,18.4 H5.8 M9.4,18.4 H15.4" stroke="#f2eaf0" stroke-width="2"/></svg><div class="pt" style="left:454px;top:1046px;color:#f2eaf0">gvfs-goa-volume-monitor.service</div><svg style="left:1270px;top:1046px" width="16" height="34"><path d="M7.7,7.2 L15.2,24.6 H0.2 Z" fill="#f2eaf0"/></svg><div class="pt" style="left:1302px;top:1046px;color:#f2eaf0">Running</div><div class="pt" style="left:1478px;top:1046px;color:#f2eaf0">Virtual filesystem service - GNOME Online Accounts monitor</div><svg style="left:422px;top:1080px" width="16" height="34"><path d="M7.6,11 V16.6 M7.6,20.2 V26.2 M0,18.4 H5.8 M9.4,18.4 H15.4" stroke="#f2eaf0" stroke-width="2"/></svg><div class="pt" style="left:454px;top:1080px;color:#f2eaf0">gvfs-gphoto2-volume-monitor.service</div><svg style="left:1270px;top:1080px" width="16" height="34"><path d="M7.7,7.2 L15.2,24.6 H0.2 Z" fill="#f2eaf0"/></svg><div class="pt" style="left:1302px;top:1080px;color:#f2eaf0">Running</div><div class="pt" style="left:1478px;top:1080px;color:#f2eaf0">Virtual filesystem service - digital camera monitor</div><svg style="left:422px;top:1114px" width="16" height="34"><path d="M7.6,11 V16.6 M7.6,20.2 V26.2 M0,18.4 H5.8 M9.4,18.4 H15.4" stroke="#f2eaf0" stroke-width="2"/></svg><div class="pt" style="left:454px;top:1114px;color:#f2eaf0">gvfs-metadata.service</div><svg style="left:1270px;top:1114px" width="16" height="34"><path d="M7.7,7.2 L15.2,24.6 H0.2 Z" fill="#f2eaf0"/></svg><div class="pt" style="left:1302px;top:1114px;color:#f2eaf0">Running</div><div class="pt" style="left:1478px;top:1114px;color:#f2eaf0">Virtual filesystem metadata service</div><svg style="left:422px;top:1148px" width="16" height="34"><path d="M7.6,11 V16.6 M7.6,20.2 V26.2 M0,18.4 H5.8 M9.4,18.4 H15.4" stroke="#f2eaf0" stroke-width="2"/></svg><div class="pt" style="left:454px;top:1148px;color:#f2eaf0">gvfs-mtp-volume-monitor.service</div><svg style="left:1270px;top:1148px" width="16" height="34"><path d="M7.7,7.2 L15.2,24.6 H0.2 Z" fill="#f2eaf0"/></svg><div class="pt" style="left:1302px;top:1148px;color:#f2eaf0">Running</div><div class="pt" style="left:1478px;top:1148px;color:#f2eaf0">Virtual filesystem service - Media Transfer Protocol monitor</div><svg style="left:422px;top:1182px" width="16" height="34"><path d="M7.6,11 V16.6 M7.6,20.2 V26.2 M0,18.4 H5.8 M9.4,18.4 H15.4" stroke="#f2eaf0" stroke-width="2"/></svg><div class="pt" style="left:454px;top:1182px;color:#f2eaf0">gvfs-udisks2-volume-monitor.service</div><svg style="left:1270px;top:1182px" width="16" height="34"><path d="M7.7,7.2 L15.2,24.6 H0.2 Z" fill="#f2eaf0"/></svg><div class="pt" style="left:1302px;top:1182px;color:#f2eaf0">Running</div><div class="pt" style="left:1478px;top:1182px;color:#f2eaf0">Virtual filesystem service - disk device monitor</div></body></html>
